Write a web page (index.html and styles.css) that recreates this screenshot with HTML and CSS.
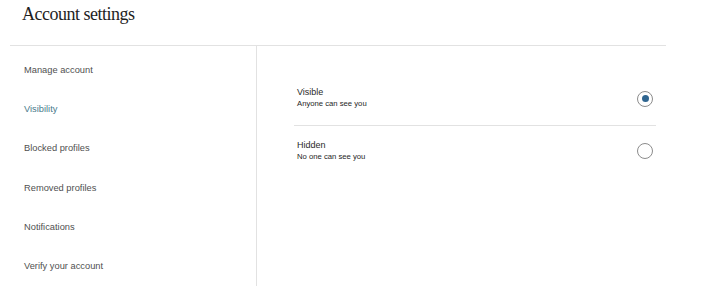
FILE: index.html
```html
<!DOCTYPE html>
<html lang="en">
<head>
    <meta charset="UTF-8" />
    <title>Account settings</title>
    <link rel="stylesheet" href="styles.css">
</head>
<body>
    <header class="header">
        <h1 class="title">Account settings</h1>
    </header>

    <div class="settings">
        <nav class="sidebar">
            <a href="#" class="side-link">Manage account</a>
            <a href="#" class="side-link active">Visibility</a>
            <a href="#" class="side-link">Blocked profiles</a>
            <a href="#" class="side-link">Removed profiles</a>
            <a href="#" class="side-link">Notifications</a>
            <a href="#" class="side-link">Verify your account</a>
        </nav>

        <section class="panel">
            <label class="option">
                <div class="option-text">
                    <div class="option-title">Visible</div>
                    <div class="option-sub">Anyone can see you</div>
                </div>
                <span class="radio checked"></span>
            </label>
            <label class="option">
                <div class="option-text">
                    <div class="option-title">Hidden</div>
                    <div class="option-sub">No one can see you</div>
                </div>
                <span class="radio"></span>
            </label>
        </section>
    </div>
</body>
</html>
```

FILE: styles.css
```css
body {
    margin: 0;
    padding: 0;
    background-color: #fff;
    font-family: 'Liberation Sans', Arial, sans-serif;
}

/* CABECERA */
.header {
    height: 45px;
    padding: 3px 0 0 22px;
    box-sizing: border-box;
}

.title {
    margin: 0;
    font-family: 'Liberation Serif', 'Times New Roman', serif;
    font-weight: normal;
    font-size: 18px;
    line-height: 22px;
    letter-spacing: -0.5px;
    color: #1e1e1e;
}

/* CONTENEDOR */
.settings {
    display: flex;
    width: 656px;
    margin-left: 10px;
    border-top: 1px solid #e2e2e2;
}

/* MENÚ LATERAL */
.sidebar {
    display: flex;
    flex-direction: column;
    flex-shrink: 0;
    width: 247px;
    height: 240px;
    padding: 5px 0 0 14px;
    box-sizing: border-box;
    border-right: 1px solid #e2e2e2;
}

.side-link {
    font-size: 9.3px;
    line-height: 39.2px;
    color: #505050;
    text-decoration: none;
}

.side-link.active {
    color: #4a7b8c;
}

/* PANEL DERECHO */
.panel {
    flex: 1;
    padding: 28px 10px 0 37px;
}

.option {
    display: flex;
    align-items: center;
    justify-content: space-between;
    padding: 13px 3px 15px 3px;
    cursor: pointer;
}

.option + .option {
    border-top: 1px solid #e2e2e2;
    padding-top: 14px;
}

.option:first-child {
    padding-bottom: 14.5px;
}

.option-title {
    font-size: 9px;
    line-height: 11px;
    color: #2a2a2a;
}

.option-sub {
    font-size: 7.7px;
    line-height: 12px;
    color: #1e1e1e;
}

.radio {
    width: 14px;
    height: 14px;
    border: 1px solid #8c8c8c;
    border-radius: 50%;
    display: flex;
    align-items: center;
    justify-content: center;
}

.radio.checked::after {
    content: '';
    width: 7px;
    height: 7px;
    border-radius: 50%;
    background-color: #2f6590;
}
```
